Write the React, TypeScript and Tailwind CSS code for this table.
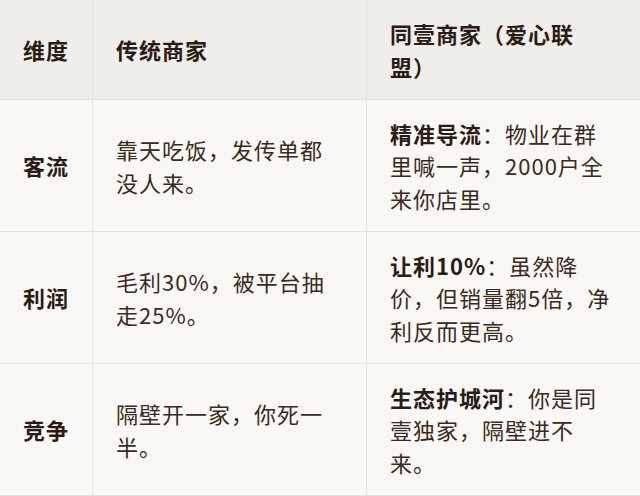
const rows = [
  {
    dim: '客流',
    old: '靠天吃饭，发传单都没人来。',
    key: '精准导流',
    text: '物业在群里喊一声，2000户全来你店里。',
  },
  {
    dim: '利润',
    old: '毛利30%，被平台抽走25%。',
    key: '让利10%',
    text: '虽然降价，但销量翻5倍，净利反而更高。',
  },
  {
    dim: '竞争',
    old: '隔壁开一家，你死一半。',
    key: '生态护城河',
    text: '你是同壹独家，隔壁进不来。',
  },
];

const cell = 'flex items-center border-b border-[#e7e3dd] px-[23px] py-[17px]';

export default function App() {
  return (
    <div
      className="w-[640px] h-[496px] overflow-hidden bg-[#faf8f4] text-[22px] leading-[32.5px] tracking-[1px] text-[#3b2a22]"
      style={{ fontFamily: '"Noto Sans CJK SC", "Noto Sans", sans-serif' }}
    >
      <div className="grid grid-cols-[93px_274px_1fr]">
        <div className={`${cell} border-r bg-[#f0eeea] font-bold text-[#2a1b15] h-[100px]`}>维度</div>
        <div className={`${cell} border-r bg-[#f0eeea] font-bold text-[#2a1b15] h-[100px]`}>传统商家</div>
        <div className={`${cell} bg-[#f0eeea] font-bold text-[#2a1b15] h-[100px]`}>
          <p className="max-w-[200px]">同壹商家（爱心联盟）</p>
        </div>

        {rows.map((r) => (
          <div key={r.dim} className="contents">
            <div className={`${cell} border-r h-[132px] font-bold text-[#2a1b15]`}>{r.dim}</div>
            <div className={`${cell} border-r h-[132px]`}>{r.old}</div>
            <div className={`${cell} h-[132px]`}>
              <p>
                <span className="font-bold text-[#2a1b15]">{r.key}</span>：{r.text}
              </p>
            </div>
          </div>
        ))}
      </div>
    </div>
  );
}
